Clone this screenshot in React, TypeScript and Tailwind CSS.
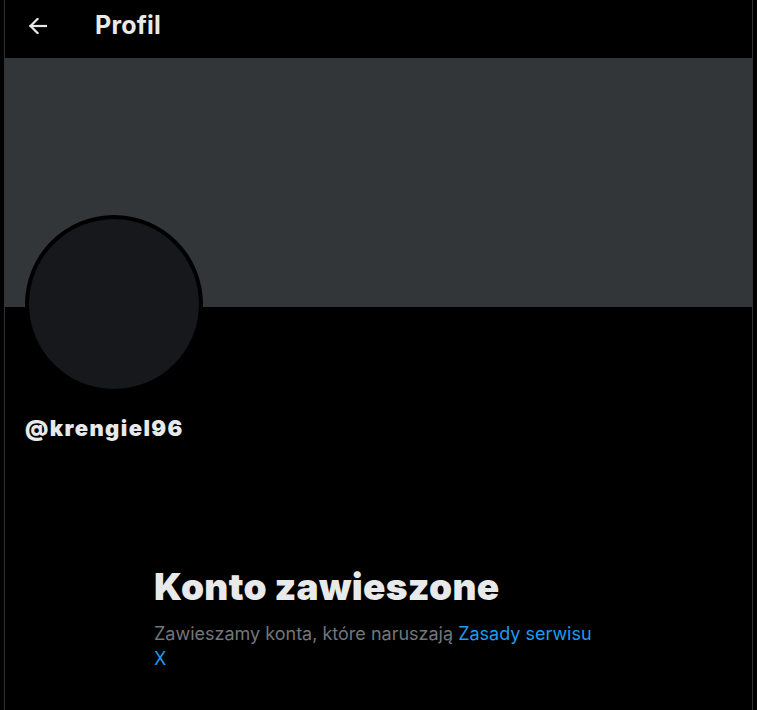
export default function App() {
  return (
    <div className="min-h-[710px] bg-black flex px-[4px]" style={{ fontFamily: 'Inter, "Noto Sans", sans-serif' }}>
      <div className="flex-1 border-x border-[#2f3336] flex flex-col">
        {/* header */}
        <div className="h-[58px] flex items-center pl-[21px] pb-[7px]">
          <div className="w-[24px] h-[24px] flex items-center justify-center">
            <svg viewBox="0 0 18 16" className="w-[18px] h-[16px]" fill="none" stroke="#e7e9ea" strokeWidth={2.2} strokeLinecap="square">
              <path d="M1.5 8h16" />
              <path d="M8.5 1L1.5 8l7 7" />
            </svg>
          </div>
          <h2 className="ml-[45px] text-[25px] font-bold text-[#e7e9ea] leading-none tracking-[0.2px]">Profil</h2>
        </div>

        {/* banner */}
        <div className="h-[249px] bg-[#333639]" />

        {/* avatar + handle */}
        <div className="px-[20px]">
          <div className="-mt-[92px] w-[178px] h-[178px] rounded-full bg-black p-[4px]">
            <div className="w-full h-full rounded-full bg-[#16181c]" />
          </div>
          <p className="mt-[24px] text-[22px] font-black text-[#e7e9ea] leading-none tracking-[1.4px]">@krengiel96</p>
        </div>

        {/* suspended notice */}
        <div className="pl-[149px] pt-[127px] w-[600px]">
          <h1 className="text-[37px] font-black text-[#e7e9ea] leading-[42px] tracking-[0.3px]">Konto zawieszone</h1>
          <p className="mt-[13px] text-[18px] text-[#71767b] leading-[25px] w-[445px]">
            Zawieszamy konta, które naruszają <span className="text-[#1d9bf0]">Zasady serwisu X</span>
          </p>
        </div>
      </div>
    </div>
  );
}
